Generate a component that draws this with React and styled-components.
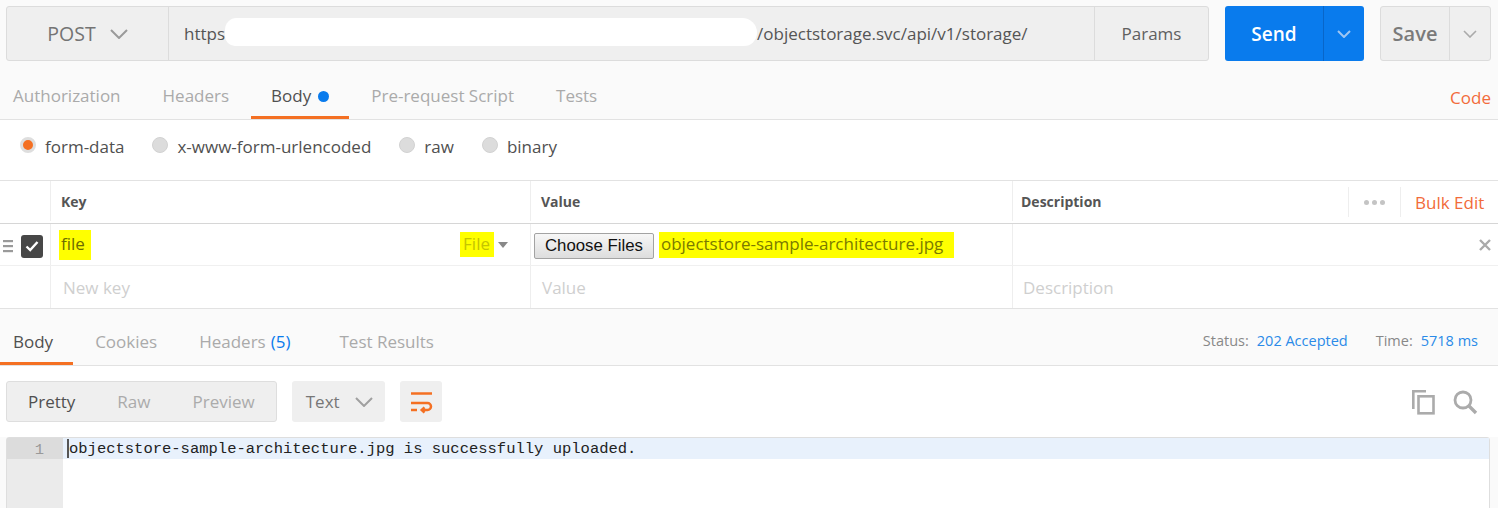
import React from 'react';
import styled, { createGlobalStyle } from 'styled-components';

const Global = createGlobalStyle`
  html, body { margin: 0; padding: 0; background: #fafafa; overflow: hidden; }
  body { font-family: "Open Sans", "Noto Sans", sans-serif; color: #505050; }
  * { box-sizing: border-box; }
`;

const Page = styled.div`
  width: 1498px;
  height: 508px;
  overflow: hidden;
  background: #fafafa;
  display: flex;
  flex-direction: column;
`;

/* ---------- top request bar ---------- */
const TopBar = styled.div`
  display: flex;
  gap: 16px;
  height: 61px;
  padding: 6px 7px 0 6px;
  flex-shrink: 0;
`;

const RequestGroup = styled.div`
  flex: 1;
  display: flex;
  background: #efefef;
  border: 1px solid #dcdcdc;
  border-radius: 3px;
  overflow: hidden;
`;

const MethodSelect = styled.div`
  width: 162px;
  display: flex;
  align-items: center;
  justify-content: center;
  gap: 14px;
  border-right: 1px solid #dcdcdc;
  font-size: 19.5px;
  color: #747474;
`;

const UrlInput = styled.div`
  flex: 1;
  display: flex;
  align-items: center;
  padding-left: 15px;
  font-size: 17px;
  color: #555;
  white-space: nowrap;
`;

const Redaction = styled.span`
  display: inline-block;
  width: 532px;
  height: 28px;
  margin-top: -4px;
  border-radius: 14px 18px 16px 12px;
  background: #fff;
`;

const ParamsButton = styled.div`
  width: 114px;
  display: flex;
  align-items: center;
  justify-content: center;
  border-left: 1px solid #dcdcdc;
  font-size: 17px;
  color: #606060;
`;

const SplitButton = styled.div`
  width: ${p => p.$w}px;
  display: flex;
  border-radius: 3px;
  overflow: hidden;
  background: ${p => (p.$primary ? '#097bed' : '#efefef')};
  border: ${p => (p.$primary ? 'none' : '1px solid #dcdcdc')};
`;

const SplitMain = styled.div`
  flex: 1;
  display: flex;
  align-items: center;
  justify-content: center;
  font-size: ${p => (p.$primary ? '19px' : '20px')};
  font-weight: 600;
  color: ${p => (p.$primary ? '#fff' : '#7a7a7a')};
`;

const SplitCaret = styled.div`
  width: 41px;
  display: flex;
  align-items: center;
  justify-content: center;
  border-left: 1px solid ${p => (p.$primary ? '#0866c9' : '#dcdcdc')};
  color: ${p => (p.$primary ? '#9fc6f2' : '#aaa')};
`;

/* ---------- tabs ---------- */
const TabBar = styled.div`
  display: flex;
  align-items: flex-end;
  height: ${p => p.$h}px;
  border-bottom: 1px solid #e2e2e2;
  background: #fafafa;
  flex-shrink: 0;
`;

const Tab = styled.div`
  display: flex;
  align-items: flex-end;
  height: 100%;
  padding: 0 20px 8px;
  margin-right: ${p => p.$mr ?? 2}px;
  font-size: 17px;
  line-height: 24px;
  color: ${p => (p.$active ? '#505050' : '#aaaaaa')};
  border-bottom: 3px solid ${p => (p.$active ? '#f47023' : 'transparent')};
  white-space: nowrap;
  &:first-child { padding-left: 13px; }
`;

const TabLabel = styled.span`
  display: inline-flex;
  align-items: center;
  gap: 7px;
`;

const Dot = styled.span`
  width: 11px;
  height: 11px;
  border-radius: 50%;
  background: #097bed;
  margin-top: 1px;
`;

const Count = styled.span`
  color: #097bed;
  margin-left: 5px;
`;

const CodeLink = styled.div`
  margin-left: auto;
  padding: 0 7px 9px 0;
  font-size: 17px;
  line-height: 24px;
  color: #f26b3a;
`;

/* ---------- body type radios ---------- */
const RadioRow = styled.div`
  display: flex;
  align-items: center;
  gap: 28px;
  height: 60px;
  padding: 0 0 7px 20px;
  background: #fff;
  flex-shrink: 0;
`;

const RadioOption = styled.label`
  display: flex;
  align-items: center;
  gap: 9px;
  font-size: 17px;
  color: #505050;
`;

const RadioCircle = styled.span`
  width: 16px;
  height: 16px;
  border-radius: 50%;
  background: ${p => (p.$checked ? '#f47023' : '#dcdcdc')};
  border: ${p => (p.$checked ? '3px solid #dedede' : '1px solid #d2d2d2')};
  margin-top: -4px;
`;

/* ---------- key / value table ---------- */
const Table = styled.div`
  background: #fff;
  border-top: 1px solid #e2e2e2;
  border-bottom: 1px solid #e2e2e2;
  flex-shrink: 0;
`;

const HeaderRow = styled.div`
  display: grid;
  grid-template-columns: 50px 480px 482px 336px 52px 1fr;
  height: 43px;
  padding-bottom: 2px;
  border-bottom: 1px solid #d6d6d6;
`;

const HeadCell = styled.div`
  display: flex;
  align-items: center;
  padding-left: ${p => p.$pl ?? 10}px;
  border-left: ${p => (p.$first ? 'none' : '1px solid #eeeeee')};
  font-size: 14px;
  font-weight: 700;
  color: #555;
`;

const MoreDots = styled.div`
  display: flex;
  align-items: center;
  justify-content: center;
  gap: 3px;
  border-left: 1px solid #eeeeee;
  margin: 6px 0 4px;
  & > span {
    width: 5px;
    height: 5px;
    border-radius: 50%;
    background: #c4c4c4;
  }
`;

const BulkEdit = styled.div`
  display: flex;
  align-items: center;
  padding-left: 14px;
  border-left: 1px solid #eeeeee;
  margin: 6px 0 4px;
  font-size: 17px;
  color: #f26b3a;
  white-space: nowrap;
`;

const Row = styled.div`
  display: grid;
  grid-template-columns: 50px 480px 482px 1fr;
  height: ${p => p.$h}px;
  border-bottom: ${p => (p.$last ? 'none' : '1px solid #f0f0f0')};
`;

const Cell = styled.div`
  display: flex;
  align-items: center;
  padding: 0 ${p => p.$pr ?? 10}px 0 ${p => p.$pl ?? 10}px;
  border-left: 1px solid #eeeeee;
  font-size: 17px;
  justify-content: ${p => p.$end ? 'flex-end' : 'flex-start'};
`;

const HandleCell = styled.div`
  display: flex;
  align-items: center;
  gap: 8px;
  padding-left: 3px;
  padding-top: 3px;
`;

const CheckBox = styled.span`
  width: 22px;
  height: 23px;
  border-radius: 3px;
  background: #474747;
  display: flex;
  align-items: center;
  justify-content: center;
`;

const Highlight = styled.span`
  display: inline-flex;
  align-items: center;
  height: ${p => p.$h}px;
  padding: 0 ${p => p.$pr}px 2px ${p => p.$pl}px;
  background: #ffff00;
  color: ${p => p.$c};
  font-size: 17px;
  white-space: nowrap;
`;

const TypeSelect = styled.span`
  margin-left: auto;
  margin-right: 12px;
  display: flex;
  align-items: center;
  gap: 4px;
`;

const Caret = styled.span`
  width: 0;
  height: 0;
  border-left: 5px solid transparent;
  border-right: 5px solid transparent;
  border-top: 6px solid #888;
`;

const ChooseButton = styled.button`
  height: 26px;
  padding: 0 10px;
  font-family: "Liberation Sans", Arial, sans-serif;
  font-size: 16.8px;
  color: #111;
  background: linear-gradient(#f7f7f7, #dddddd);
  border: 1px solid #a3a3a3;
  border-radius: 2px;
  margin-right: 5px;
  margin-top: 3px;
`;

const Placeholder = styled.span`
  color: #cfcfcf;
  font-size: 17px;
`;

/* ---------- response ---------- */
const StatusArea = styled.div`
  margin-left: auto;
  display: flex;
  gap: 28px;
  padding: 0 20px 14px 0;
  font-size: 14.5px;
  line-height: 20px;
`;

const StatusItem = styled.span`
  color: #888;
  & > b {
    font-weight: 400;
    color: #2a8ae8;
    margin-left: 8px;
  }
`;

const Toolbar = styled.div`
  display: flex;
  align-items: center;
  gap: 15px;
  height: 71px;
  padding: 0 20px 0 6px;
  background: #fff;
  flex-shrink: 0;
`;

const SegGroup = styled.div`
  display: flex;
  height: 41px;
  background: #efefef;
  border: 1px solid #dedede;
  border-radius: 3px;
`;

const Segment = styled.div`
  display: flex;
  align-items: center;
  padding: 0 21px;
  font-size: 17px;
  color: ${p => (p.$active ? '#505050' : '#ababab')};
`;

const Dropdown = styled.div`
  width: 93px;
  height: 41px;
  display: flex;
  align-items: center;
  gap: 15px;
  padding-left: 14px;
  background: #efefef;
  border-radius: 3px;
  font-size: 17px;
  color: #777;
`;

const IconButton = styled.div`
  width: 42px;
  height: 41px;
  display: flex;
  align-items: center;
  justify-content: center;
  background: #efefef;
  border-radius: 3px;
`;

const ToolIcons = styled.div`
  margin-left: auto;
  display: flex;
  align-items: center;
  gap: 16px;
`;

const Editor = styled.div`
  flex: 1;
  display: flex;
  margin: 0 8px 0 6px;
  border: 1px solid #dedede;
  border-radius: 3px;
  background: #fff;
  min-height: 90px;
`;

const Gutter = styled.div`
  width: 56px;
  background: #ebebeb;
  flex-shrink: 0;
`;

const LineNo = styled.div`
  height: 21px;
  line-height: 21px;
  padding: 2px 19px 0 0;
  text-align: right;
  background: ${p => (p.$active ? '#dcdcdc' : 'transparent')};
  font-family: "Liberation Mono", "DejaVu Sans Mono", monospace;
  font-size: 15.5px;
  color: #999;
`;

const CodeArea = styled.div`
  flex: 1;
`;

const CodeLine = styled.div`
  height: 21px;
  line-height: 21px;
  padding: 2px 0 0 4px;
  background: ${p => (p.$active ? '#e8f1fc' : 'transparent')};
  font-family: "Liberation Mono", "DejaVu Sans Mono", monospace;
  font-size: 15.5px;
  color: #222;
  white-space: pre;
  display: flex;
  align-items: center;
`;

const Cursor = styled.span`
  width: 2px;
  height: 19px;
  margin-top: -2px;
  background: #555;
`;

/* ---------- icons ---------- */
const Chevron = ({ w = 18, h = 10, sw = 2 }) => (
  <svg width={w} height={h} viewBox={`0 0 ${w} ${h}`} fill="none">
    <path d={`M1 1 L${w / 2} ${h - 1} L${w - 1} 1`} stroke="currentColor" strokeWidth={sw} />
  </svg>
);

const DragHandle = () => (
  <svg width="10" height="14" viewBox="0 0 10 14">
    <rect x="0" y="1" width="10" height="2.2" fill="#9a9a9a" />
    <rect x="0" y="6" width="10" height="2.2" fill="#9a9a9a" />
    <rect x="0" y="11" width="10" height="2.2" fill="#9a9a9a" />
  </svg>
);

const Check = () => (
  <svg width="14" height="12" viewBox="0 0 14 12" fill="none">
    <path d="M1.5 6.5 L5.2 10 L12.5 2" stroke="#fff" strokeWidth="2.4" />
  </svg>
);

const CloseX = () => (
  <svg width="12" height="12" viewBox="0 0 12 12" fill="none">
    <path d="M1 1 L11 11 M11 1 L1 11" stroke="#aaa" strokeWidth="2.4" />
  </svg>
);

const WrapIcon = () => (
  <svg width="24" height="24" viewBox="0 0 24 24" fill="none" stroke="#f47023" strokeWidth="2.5">
    <path d="M2 3.5 H23" />
    <path d="M2 13 H18.5 a3.5 3.5 0 0 1 0 7 H13" />
    <path d="M15.5 17.3 L12.7 20 L15.5 22.7" />
    <path d="M2 20 H8" />
  </svg>
);

const CopyIcon = () => (
  <svg width="25" height="26" viewBox="0 0 25 26" fill="none" stroke="#ababab" strokeWidth="2.6">
    <path d="M2.3 20 V2.3 H15" />
    <rect x="7.5" y="7.3" width="15" height="17" />
  </svg>
);

const SearchIcon = () => (
  <svg width="26" height="26" viewBox="0 0 26 26" fill="none" stroke="#ababab">
    <circle cx="11" cy="11" r="8" strokeWidth="2.8" />
    <path d="M17 17 L24 24" strokeWidth="3.4" />
  </svg>
);

export default function App() {
  return (
    <Page>
      <Global />
      <TopBar>
        <RequestGroup>
          <MethodSelect>
            POST
            <span style={{ color: '#9a9a9a', display: 'flex' }}><Chevron /></span>
          </MethodSelect>
          <UrlInput>
            https<Redaction />/objectstorage.svc/api/v1/storage/
          </UrlInput>
          <ParamsButton>Params</ParamsButton>
        </RequestGroup>
        <SplitButton $primary $w={139}>
          <SplitMain $primary>Send</SplitMain>
          <SplitCaret $primary><Chevron w={14} h={8} /></SplitCaret>
        </SplitButton>
        <SplitButton $w={111}>
          <SplitMain>Save</SplitMain>
          <SplitCaret><Chevron w={14} h={8} sw={1.6} /></SplitCaret>
        </SplitButton>
      </TopBar>

      <TabBar $h={59}>
        <Tab>Authorization</Tab>
        <Tab>Headers</Tab>
        <Tab $active><TabLabel>Body<Dot /></TabLabel></Tab>
        <Tab>Pre-request Script</Tab>
        <Tab>Tests</Tab>
        <CodeLink>Code</CodeLink>
      </TabBar>

      <RadioRow>
        <RadioOption><RadioCircle $checked />form-data</RadioOption>
        <RadioOption><RadioCircle />x-www-form-urlencoded</RadioOption>
        <RadioOption><RadioCircle />raw</RadioOption>
        <RadioOption><RadioCircle />binary</RadioOption>
      </RadioRow>

      <Table>
        <HeaderRow>
          <HeadCell $first />
          <HeadCell>Key</HeadCell>
          <HeadCell>Value</HeadCell>
          <HeadCell $pl={8}>Description</HeadCell>
          <MoreDots><span /><span /><span /></MoreDots>
          <BulkEdit>Bulk Edit</BulkEdit>
        </HeaderRow>
        <Row $h={42}>
          <HandleCell>
            <DragHandle />
            <CheckBox><Check /></CheckBox>
          </HandleCell>
          <Cell $pl={8} $pr={10}>
            <Highlight $h={30} $pl={2} $pr={6} $c="#6d6d00">file</Highlight>
            <TypeSelect>
              <Highlight $h={25} $pl={3} $pr={4} $c="#c4c400">File</Highlight>
              <Caret />
            </TypeSelect>
          </Cell>
          <Cell $pl={3}>
            <ChooseButton>Choose Files</ChooseButton>
            <Highlight $h={26} $pl={2} $pr={11} $c="#7a7a00">objectstore-sample-architecture.jpg</Highlight>
          </Cell>
          <Cell $end $pr={7}>
            <CloseX />
          </Cell>
        </Row>
        <Row $h={42} $last>
          <HandleCell />
          <Cell $pl={12}><Placeholder>New key</Placeholder></Cell>
          <Cell $pl={11}><Placeholder>Value</Placeholder></Cell>
          <Cell $pl={10}><Placeholder>Description</Placeholder></Cell>
        </Row>
      </Table>

      <TabBar $h={57}>
        <Tab $active>Body</Tab>
        <Tab>Cookies</Tab>
        <Tab $mr={9}>Headers<Count>(5)</Count></Tab>
        <Tab>Test Results</Tab>
        <StatusArea>
          <StatusItem>Status:<b>202 Accepted</b></StatusItem>
          <StatusItem>Time:<b>5718 ms</b></StatusItem>
        </StatusArea>
      </TabBar>

      <Toolbar>
        <SegGroup>
          <Segment $active>Pretty</Segment>
          <Segment>Raw</Segment>
          <Segment>Preview</Segment>
        </SegGroup>
        <Dropdown>
          Text
          <span style={{ color: '#a0a0a0', display: 'flex' }}><Chevron /></span>
        </Dropdown>
        <IconButton><WrapIcon /></IconButton>
        <ToolIcons>
          <CopyIcon />
          <SearchIcon />
        </ToolIcons>
      </Toolbar>

      <Editor>
        <Gutter>
          <LineNo $active>1</LineNo>
        </Gutter>
        <CodeArea>
          <CodeLine $active><Cursor />objectstore-sample-architecture.jpg is successfully uploaded.</CodeLine>
        </CodeArea>
      </Editor>
    </Page>
  );
}
